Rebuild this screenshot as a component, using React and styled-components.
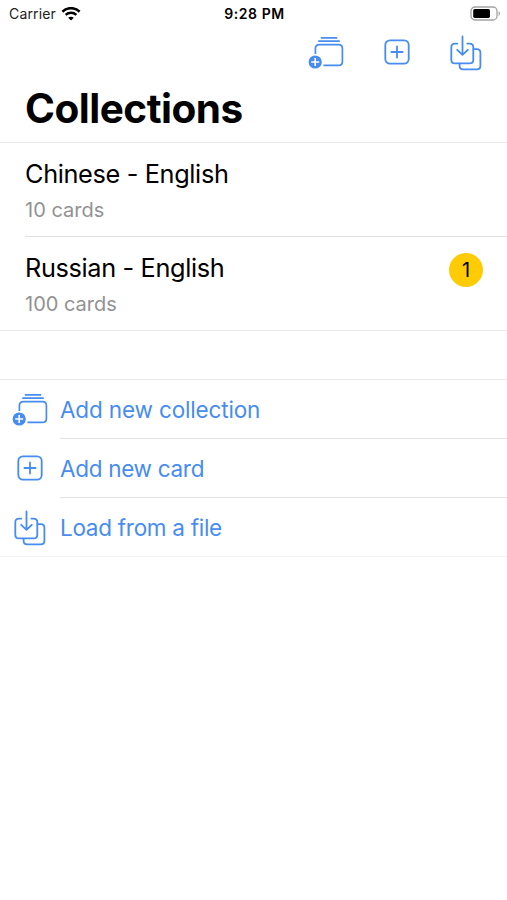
import React from "react";
import styled, { createGlobalStyle } from "styled-components";

const collections = [
  { name: "Chinese - English", cards: 10 },
  { name: "Russian - English", cards: 100, due: 1 },
];

const WifiIcon = () => (
  <svg width="20" height="14" viewBox="0 0 20 14" fill="none" stroke="#000">
    <path d="M1.4 4.7C6.2 0 13.8 0 18.6 4.7" strokeWidth="2.6" />
    <path d="M4.6 7.9C7.7 5 12.3 5 15.4 7.9" strokeWidth="2.3" />
    <path d="M10 13.6 7.2 10.8C8.8 9.4 11.2 9.4 12.8 10.8Z" fill="#000" stroke="none" />
  </svg>
);

const BatteryIcon = () => (
  <svg width="31" height="15" viewBox="0 0 31 15">
    <rect x="1" y="1" width="26" height="13" rx="4" fill="none" stroke="#a2a2a2" strokeWidth="1.3" />
    <rect x="3.2" y="3.1" width="16.8" height="8.8" rx="1.6" fill="#000" />
    <path d="M28.6 5v5c1.8-.8 1.8-4.2 0-5Z" fill="#a2a2a2" />
  </svg>
);

const CollectionIcon = () => (
  <svg width="36" height="34" viewBox="0 0 36 34" fill="none" stroke="currentColor" strokeWidth="1.7">
    <path d="M12.8 1.8h16.4M10.2 5.2h21.6" />
    <path d="M7.4 18V12.6Q7.4 8.6 11.4 8.6h19q4 0 4 4v12.8q0 4-4 4H15.4" />
    <circle cx="7.2" cy="26" r="6.6" fill="currentColor" stroke="none" />
    <path d="M7.2 22v8M3.2 26h8" stroke="#fff" strokeWidth="1.6" />
  </svg>
);

const CardIcon = () => (
  <svg width="26" height="28" viewBox="0 0 26 28" fill="none" stroke="currentColor" strokeWidth="1.8" strokeLinecap="round">
    <rect x="1.3" y="1.3" width="23.4" height="23.4" rx="4.6" />
    <path d="M13 7.4v11.2M7.4 13h11.2" />
  </svg>
);

const LoadIcon = () => (
  <svg width="32" height="36" viewBox="0 0 32 36" fill="none" stroke="currentColor" strokeWidth="1.8" strokeLinecap="round" strokeLinejoin="round">
    <path d="M7.3 8.6H5Q1.3 8.6 1.3 12.3v12.4q0 3.7 3.7 3.7h14.6q3.7 0 3.7-3.7V12.3Q23.3 8.6 19.6 8.6h-2.3" />
    <path d="M12.5 1.5v18M7.2 14.8l5.3 5 5.3-5" />
    <path d="M23.6 14.2h3.2q3.6 0 3.6 3.6v13q0 3.6-3.6 3.6H13.2q-3.6 0-3.6-3.6v-2.2" />
  </svg>
);

const actions = [
  { label: "Add new collection", icon: CollectionIcon, spacing: -0.15 },
  { label: "Add new card", icon: CardIcon, spacing: -0.3 },
  { label: "Load from a file", icon: LoadIcon, spacing: -0.28 },
];

const App = () => {
  return (
    <Screen>
      <GlobalStyle />
      <StatusBar>
        <Carrier>
          Carrier
          <WifiIcon />
        </Carrier>
        <Clock>9:28 PM</Clock>
        <Battery>
          <BatteryIcon />
        </Battery>
      </StatusBar>
      <Toolbar>
        {actions.map(({ label, icon: Icon }) => (
          <ToolButton key={label} aria-label={label}>
            <Icon />
          </ToolButton>
        ))}
      </Toolbar>
      <Title>Collections</Title>
      <CollectionList>
        {collections.map((item) => (
          <CollectionRow key={item.name}>
            <div>
              <CollectionName>{item.name}</CollectionName>
              <CardCount>{item.cards} cards</CardCount>
            </div>
            {item.due && <Badge>{item.due}</Badge>}
          </CollectionRow>
        ))}
      </CollectionList>
      <ActionList>
        {actions.map(({ label, icon: Icon, spacing }) => (
          <ActionRow key={label}>
            <ActionIcon>
              <Icon />
            </ActionIcon>
            <ActionLabel $spacing={spacing}>{label}</ActionLabel>
          </ActionRow>
        ))}
      </ActionList>
    </Screen>
  );
};

export default App;

// Styled Components
const GlobalStyle = createGlobalStyle`
  * {
    box-sizing: border-box;
  }

  body {
    margin: 0;
    background: #fff;
  }

  svg {
    display: block;
    flex: none;
  }
`;

const Screen = styled.div`
  width: 507px;
  height: 900px;
  overflow: hidden;
  background: #fff;
  color: #000;
  font-family: Inter, "Liberation Sans", sans-serif;
`;

const StatusBar = styled.header`
  display: grid;
  grid-template-columns: 1fr auto 1fr;
  align-items: center;
  height: 27px;
  padding: 0 6px 0 9px;
  font-size: 14px;
`;

const Carrier = styled.div`
  display: flex;
  align-items: center;
  gap: 5px;
  color: #222;
  letter-spacing: 0.15px;
`;

const Clock = styled.div`
  margin-left: -1px;
  font-weight: 600;
  letter-spacing: 0.55px;
`;

const Battery = styled.div`
  display: flex;
  justify-content: flex-end;
`;

const Toolbar = styled.nav`
  display: flex;
  justify-content: flex-end;
  align-items: center;
  gap: 40px;
  height: 52px;
  padding-right: 25px;
`;

const ToolButton = styled.button`
  display: flex;
  padding: 0;
  border: none;
  background: none;
  color: #478cf0;
`;

const Title = styled.h1`
  height: 64px;
  margin: 0;
  padding-left: 25px;
  border-bottom: 1px solid #e9e9e9;
  font-size: 40.5px;
  font-weight: 700;
  line-height: 59px;
  letter-spacing: -0.5px;
`;

const CollectionList = styled.ul`
  margin: 0;
  padding: 0;
  border-bottom: 1px solid #e9e9e9;
  list-style: none;
`;

const CollectionRow = styled.li`
  display: flex;
  justify-content: space-between;
  height: 93px;
  margin-left: 25px;
  padding: 14px 24px 0 0;

  & + & {
    height: 94px;
    border-top: 1px solid #e2e2e2;
  }
`;

const CollectionName = styled.div`
  font-size: 25.3px;
  line-height: 34px;
  letter-spacing: -0.35px;
`;

const CardCount = styled.div`
  margin-top: 5px;
  color: #929292;
  font-size: 20px;
  line-height: 28px;
`;

const Badge = styled.span`
  display: flex;
  align-items: center;
  justify-content: center;
  width: 34px;
  height: 34px;
  margin-top: 2px;
  border-radius: 50%;
  background: #ffcb05;
  font-size: 20px;
`;

const ActionList = styled.ul`
  margin: 48px 0 0;
  padding: 0;
  border-top: 1px solid #e9e9e9;
  border-bottom: 1px solid #f2f2f2;
  color: #478cf0;
  list-style: none;
`;

const ActionRow = styled.li`
  display: flex;
  align-items: stretch;
  height: 59px;

  &:last-child {
    height: 58px;
  }

  &:last-child > span {
    border-bottom: none;
  }
`;

const ActionIcon = styled.div`
  display: flex;
  align-items: center;
  justify-content: center;
  width: 60px;
  padding-top: 1px;
`;

const ActionLabel = styled.span`
  flex: 1;
  border-bottom: 1px solid #e2e2e2;
  font-size: 22.5px;
  line-height: 60px;
  letter-spacing: ${({ $spacing }) => $spacing}px;
`;
